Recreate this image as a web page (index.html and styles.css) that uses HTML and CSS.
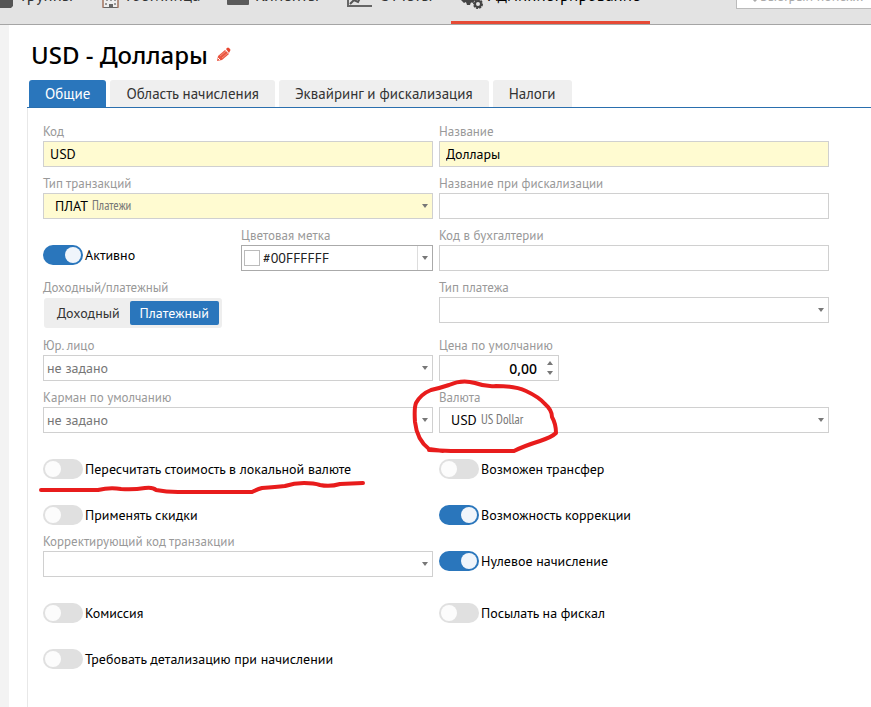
FILE: index.html
```html
<!DOCTYPE html>
<html lang="ru">

<head>
    <meta charset="UTF-8">
    <meta name="viewport" content="width=device-width, initial-scale=1">
    <title>USD - Доллары</title>
    <link rel="stylesheet" href="styles.css">
</head>

<body>
    <!-- Верхнее меню -->
    <header class="topbar">
        <nav class="menu">
            <a href="#" class="menu-item groups">
                <svg width="13" height="22" viewBox="0 0 13 22"><path d="M0 2h10l3 3v14l-2 2H0z" fill="#555"/></svg>
                Группы
            </a>
            <a href="#" class="menu-item hotel">
                <svg width="18" height="22" viewBox="0 0 18 22"><path d="M1 2h15v18.500H1z" fill="#eee" stroke="#666"/><path d="M1 13v8M16 13v8" stroke="#c07a5a"/><path d="M4 12h2v2H4zM8 12h2v2H8zM12 12h2v2h-2zM3 16h2v2H3zM12 16h2v2h-2z" fill="#999"/><path d="M7 17h4v4H7z" fill="#666"/></svg>
                Гостиница
            </a>
            <a href="#" class="menu-item clients">
                <svg width="22" height="22" viewBox="0 0 22 22"><path d="M0 1h22v16q0 1-1 1H1q-1 0-1-1z" fill="#5a5a5a"/></svg>
                Клиенты
            </a>
            <a href="#" class="menu-item reports">
                <svg width="26" height="22" viewBox="0 0 26 22"><path d="M1 0v19h24" fill="none" stroke="#666" stroke-width="2"/><path d="M3 17l4-4 4 2 4-8" fill="none" stroke="#555" stroke-width="2"/></svg>
                Отчеты
            </a>
            <a href="#" class="menu-item admin active">
                <svg width="23" height="22" viewBox="0 0 23 22"><circle cx="8" cy="10" r="6" fill="#444"/><path d="M0 13l3 3 2-1 1 3h3l1-3 2 1 2-3z" fill="#444"/><circle cx="17" cy="17" r="3" fill="none" stroke="#444" stroke-width="2"/><circle cx="17" cy="17" r="4" fill="none" stroke="#444" stroke-width="2" stroke-dasharray="2 1"/></svg>
                Администрирование
            </a>
        </nav>
        <div class="search">
            <svg width="14" height="14" viewBox="0 0 14 14"><circle cx="6" cy="5" r="4" fill="none" stroke="#aaa" stroke-width="2"/><path d="M9 8l4 4" stroke="#aaa" stroke-width="3"/></svg>
            <input type="text" placeholder="Быстрый поиск..." aria-label="Быстрый поиск">
        </div>
    </header>

    <main class="content">
        <div class="title">
            <h1>USD - Доллары</h1>
            <button type="button" class="edit" aria-label="Изменить">
                <svg width="16" height="16" viewBox="0 0 16 16"><path d="M1 14l1-5 7-6 4 4-7 6z" fill="#ea5540"/><path d="M10 2l1-1q1-1 2 0l1 1q1 1 0 2l-1 2z" fill="#e8452f"/><path d="M4 9l6-5M6 11l6-5" stroke="#f3907f" stroke-width="1"/><path d="M2 11l2 2" stroke="#fff" stroke-width="1"/></svg>
            </button>
        </div>

        <div class="tabs">
            <button type="button" class="tab active">Общие</button>
            <button type="button" class="tab">Область начисления</button>
            <button type="button" class="tab">Эквайринг и фискализация</button>
            <button type="button" class="tab">Налоги</button>
        </div>

        <form class="panel">
            <div class="field">
                <label for="code">Код</label>
                <input class="control required" id="code" type="text" value="USD">
            </div>
            <div class="field">
                <label for="name">Название</label>
                <input class="control required" id="name" type="text" value="Доллары">
            </div>

            <div class="field">
                <label for="trans-type">Тип транзакций</label>
                <div class="select">
                    <select class="control required coded" id="trans-type"><option>ПЛАТ</option></select>
                    <span class="hint">Платежи</span>
                </div>
            </div>
            <div class="field">
                <label for="fiscal-name">Название при фискализации</label>
                <input class="control" id="fiscal-name" type="text">
            </div>

            <div class="pair">
                <label class="switch"><input type="checkbox" checked>Активно</label>
                <div class="field">
                    <label for="color">Цветовая метка</label>
                    <div class="select color">
                        <select class="control" id="color"><option>#00FFFFFF</option></select>
                        <span class="swatch"></span>
                    </div>
                </div>
            </div>
            <div class="field">
                <label for="account-code">Код в бухгалтерии</label>
                <input class="control" id="account-code" type="text">
            </div>

            <div class="field">
                <span class="caption">Доходный/платежный</span>
                <div class="segmented">
                    <button type="button">Доходный</button>
                    <button type="button" class="active">Платежный</button>
                </div>
            </div>
            <div class="field">
                <label for="pay-type">Тип платежа</label>
                <div class="select">
                    <select class="control" id="pay-type"><option></option></select>
                </div>
            </div>

            <div class="field">
                <label for="legal">Юр. лицо</label>
                <div class="select">
                    <select class="control empty" id="legal"><option>не задано</option></select>
                </div>
            </div>
            <div class="field">
                <label for="price">Цена по умолчанию</label>
                <div class="spinner">
                    <input class="control" id="price" type="text" inputmode="decimal" value="0,00">
                    <div class="spinner-buttons">
                        <button type="button" class="up" aria-label="Больше"></button>
                        <button type="button" class="down" aria-label="Меньше"></button>
                    </div>
                </div>
            </div>

            <div class="field">
                <label for="pocket">Карман по умолчанию</label>
                <div class="select">
                    <select class="control empty" id="pocket"><option>не задано</option></select>
                </div>
            </div>
            <div class="field">
                <label for="currency">Валюта</label>
                <div class="select">
                    <select class="control coded" id="currency"><option>USD</option></select>
                    <span class="hint short">US Dollar</span>
                </div>
            </div>

            <label class="switch"><input type="checkbox">Пересчитать стоимость в локальной валюте</label>
            <label class="switch"><input type="checkbox">Возможен трансфер</label>

            <label class="switch"><input type="checkbox">Применять скидки</label>
            <label class="switch"><input type="checkbox" checked>Возможность коррекции</label>

            <div class="field">
                <label for="correction">Корректирующий код транзакции</label>
                <div class="select">
                    <select class="control" id="correction"><option></option></select>
                </div>
            </div>
            <label class="switch"><input type="checkbox" checked>Нулевое начисление</label>

            <label class="switch"><input type="checkbox">Комиссия</label>
            <label class="switch"><input type="checkbox">Посылать на фискал</label>

            <label class="switch"><input type="checkbox">Требовать детализацию при начислении</label>
        </form>
    </main>

    <!-- Пометки маркером -->
    <svg class="marks" width="871" height="707" viewBox="0 0 871 707">
        <path d="M443 451L429 449Q417 440 415 422Q414 408 416 403Q421 394 431 390Q440 388 449 385Q462 379 475 383Q486 387 496 386Q515 386 526 391Q539 397 545 404Q552 410 552 417Q556 424 556 433Q552 437 540 441Q524 446 514 451H451L429 450"/>
        <path d="M41 490H98Q110 487 121 489Q133 490 145 488Q153 487 156 490Q166 492 178 492H252Q258 489 262 488Q276 487 285 486Q294 483 304 483Q314 483 320 485Q330 487 340 484L363 483"/>
    </svg>
</body>

</html>
```
FILE: styles.css
```css
* {
    box-sizing: border-box;
    margin: 0;
    padding: 0;
}

body {
    position: relative;
    display: flex;
    flex-direction: column;
    min-height: 100vh;
    overflow-x: hidden;
    font-family: "PT Sans", "Noto Sans", sans-serif;
    font-size: 14px;
    color: #000;
    background-color: #fff;
}

input,
select,
button {
    font: inherit;
    color: inherit;
}

button {
    border: none;
    background: none;
    cursor: pointer;
}

/* Верхнее меню */
.topbar {
    display: flex;
    align-items: flex-end;
    justify-content: space-between;
    height: 25px;
    overflow: hidden;
    border-bottom: 1px solid #a5a5a5;
    background-color: #e3e3e3;
}

.menu {
    display: flex;
}

.menu-item {
    display: flex;
    align-items: center;
    gap: 8px;
    height: 58px;
    font-size: 17px;
    color: #333;
    text-decoration: none;
    white-space: nowrap;
}

.menu-item svg {
    flex-shrink: 0;
    margin-top: 6px;
}

.groups {
    width: 102px;
}

.hotel {
    width: 125px;
    gap: 6px;
}

.clients {
    width: 120px;
    gap: 6px;
}

.reports {
    width: 104px;
    gap: 6px;
}

.admin {
    width: 199px;
    padding: 3px 0 0 10px;
    gap: 4px;
}

.menu-item.active {
    color: #000;
    border-bottom: 3px solid #e64a35;
}

.search {
    display: flex;
    align-items: center;
    gap: 3px;
    width: 135px;
    height: 26px;
    margin-bottom: 15px;
    padding-left: 6px;
    flex-shrink: 0;
    border: 1px solid #bbb;
    border-right: none;
    background-color: #fff;
}

.search svg {
    flex-shrink: 0;
}

.search input {
    width: 100%;
    min-width: 0;
    border: none;
    outline: none;
}

.search input::placeholder {
    color: #aaa;
}

/* Содержимое */
.content {
    display: flex;
    flex-direction: column;
    flex: 1;
    border-left: 9px solid #f3f3f3;
}

.title {
    display: flex;
    align-items: center;
    gap: 8px;
    height: 55px;
    padding: 4px 0 0 22px;
}

h1 {
    font-family: "Segoe UI", "Noto Sans", sans-serif;
    font-size: 24px;
    line-height: 30px;
    font-weight: 500;
}

.edit {
    height: 16px;
}

.tabs {
    display: flex;
    gap: 4px;
    margin-left: 18px;
    padding-left: 2px;
    border-bottom: 1px solid #2a6fae;
}

.tab {
    height: 27px;
    padding: 0 16px;
    border-radius: 3px 3px 0 0;
    background-color: #efefef;
    font-size: 15px;
    color: #333;
    white-space: nowrap;
}

.tab.active {
    background-color: #2a76bc;
    color: #fff;
}

/* Форма */
.panel {
    display: grid;
    grid-template-columns: 1fr 1fr;
    gap: 8px 6px;
    align-content: start;
    flex: 1;
    margin-left: 18px;
    padding: 15px 42px 30px 15px;
    border-left: 1px solid #e8e8e8;
}

.pair {
    display: grid;
    grid-template-columns: 1fr 1fr;
    gap: 6px;
}

.field label,
.caption {
    display: block;
    height: 18px;
    line-height: 18px;
    font-size: 13px;
    color: #999;
    white-space: nowrap;
}

.control {
    display: block;
    width: 100%;
    height: 26px;
    padding: 0 6px;
    border: 1px solid #d0d0d0;
    border-radius: 0;
    outline: none;
    background-color: #fff;
    appearance: none;
}

.control.required {
    background-color: #fffbd1;
}

.control.coded {
    padding-left: 11px;
}

.control.empty {
    padding-left: 3px;
    color: #777;
}

.select {
    position: relative;
}

.select::after,
.up::after,
.down::after {
    content: "";
    display: block;
    border: 3px solid transparent;
    border-top: 4px solid #777;
    border-bottom: none;
}

.select::after {
    position: absolute;
    top: 11px;
    right: 5px;
    pointer-events: none;
}

.hint {
    position: absolute;
    top: 0;
    left: 49px;
    line-height: 26px;
    font-family: "PT Sans Narrow", "Liberation Sans Narrow", "Noto Sans", sans-serif;
    font-size: 13px;
    color: #777;
    pointer-events: none;
}

.hint.short {
    left: 42px;
}

.color .control {
    padding-left: 21px;
    border-color: #aaa;
    background: linear-gradient(#ddd, #ddd) right 14px top / 1px 100% no-repeat;
    color: #222;
}

.swatch {
    position: absolute;
    top: 5px;
    left: 3px;
    width: 16px;
    height: 16px;
    border: 1px solid #bbb;
    background-color: #fff;
    pointer-events: none;
}

.segmented {
    display: inline-flex;
    height: 30px;
    margin: 1px;
    padding: 3px;
    border-radius: 3px;
    background-color: #eee;
    vertical-align: top;
}

.segmented button {
    padding: 0 10px;
    border-radius: 2px;
    color: #333;
}

.segmented button.active {
    background-color: #2a76bc;
    color: #fff;
}

.spinner {
    position: relative;
    width: 120px;
}

.spinner .control {
    padding-right: 21px;
    text-align: right;
    font-family: "Segoe UI", "Noto Sans", sans-serif;
    font-weight: 500;
}

.spinner-buttons {
    position: absolute;
    top: 6px;
    right: 6px;
    display: flex;
    flex-direction: column;
    gap: 6px;
}

.up::after {
    border-top: none;
    border-bottom: 4px solid #777;
}

.spinner-buttons button {
    height: 4px;
}

/* Переключатели */
.switch {
    display: flex;
    align-items: center;
    gap: 2px;
    height: 38px;
    padding-top: 18px;
    white-space: nowrap;
}

.switch input {
    width: 40px;
    height: 20px;
    padding: 2px;
    border-radius: 10px;
    background-color: #e0e0e0;
    appearance: none;
    cursor: pointer;
}

.switch input::before {
    content: "";
    display: block;
    width: 16px;
    height: 16px;
    border-radius: 50%;
    background-color: #fcfcfc;
}

.switch input:checked {
    background-color: #2a76bc;
}

.switch input:checked::before {
    margin-left: auto;
    background-color: #f0f5fb;
}

/* Пометки маркером */
.marks {
    position: absolute;
    top: 0;
    left: 0;
    pointer-events: none;
}

.marks path {
    fill: none;
    stroke: #e81c1c;
    stroke-width: 4;
    stroke-linecap: round;
    stroke-linejoin: round;
}
```
